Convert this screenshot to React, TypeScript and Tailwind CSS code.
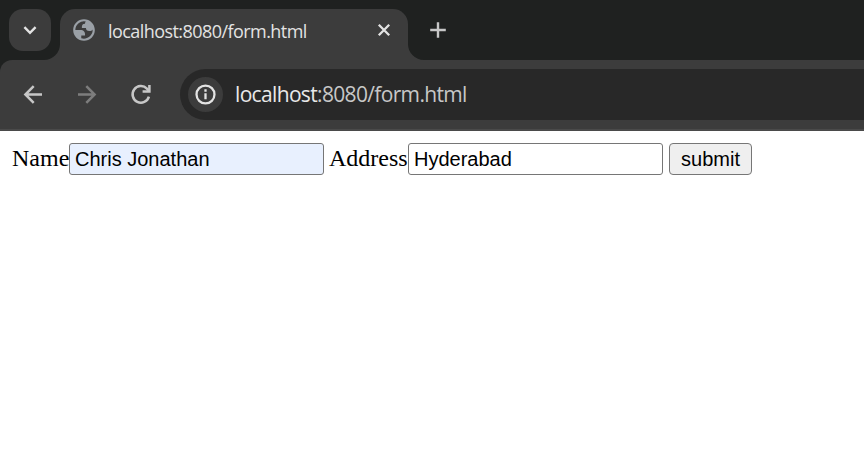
import React from "react";

const uiFont = "font-['Open_Sans','Noto_Sans',sans-serif]";
const formFont = "font-['Liberation_Sans',Arial,sans-serif]";

function GlobeIcon() {
  return (
    <svg className="size-[26px] shrink-0" viewBox="0 0 24 24" fill="#9aa0a6">
      <path
        fillRule="evenodd"
        d="M12 2C6.48 2 2 6.48 2 12s4.48 10 10 10 10-4.48 10-10S17.52 2 12 2zM4 12h4.4c3.407.022 4.922 1.73 4.543 5.127H9.488v2.47a8.004 8.004 0 0 0 10.498-8.08C19.327 12.5 18.332 13 17 13c-2.137 0-3.206-.916-3.206-2.75h-3.748c-.274-2.728.683-4.092 2.87-4.092 0-.975.327-1.597.811-1.97A8.004 8.004 0 0 0 4 12z"
      />
    </svg>
  );
}

function TabStrip() {
  return (
    <div className="flex h-[60px] items-start bg-[#1f2120] pt-[9px] pl-[9px]">
      <button className="flex size-[42px] shrink-0 items-center justify-center rounded-[14px] bg-[#3c3c3c]">
        <svg className="size-[14px]" viewBox="0 0 14 14" fill="none" stroke="#e3e3e3" strokeWidth="2.4">
          <path d="M1.4 4.2 7 9.8l5.6-5.6" />
        </svg>
      </button>
      <div className="relative ml-[9px] flex h-[51px] w-[348px] shrink-0 rounded-t-[15px] bg-[#3c3c3c] pl-[11px]">
        <svg className="absolute bottom-0 -left-4 size-4" viewBox="0 0 16 16" fill="#3c3c3c">
          <path d="M16 0v16H0A16 16 0 0 0 16 0z" />
        </svg>
        <svg className="absolute -right-4 bottom-0 size-4" viewBox="0 0 16 16" fill="#3c3c3c">
          <path d="M0 0v16h16A16 16 0 0 1 0 0z" />
        </svg>
        <div className="flex h-[42px] flex-1 items-center">
          <GlobeIcon />
          <span className={`${uiFont} ml-[11px] w-[266px] pt-[2px] text-[18px] leading-6 tracking-[-0.56px] whitespace-nowrap text-[#e3e3e3]`}>
            localhost:8080/form.html
          </span>
          <svg className="size-[20px] shrink-0" viewBox="0 0 20 20" fill="none" stroke="#e3e3e3" strokeWidth="2.3">
            <path d="m4.8 4.8 10.4 10.4m0-10.4L4.8 15.2" />
          </svg>
        </div>
      </div>
      <svg className="mt-[11px] ml-5 size-5 shrink-0" viewBox="0 0 20 20" fill="none" stroke="#c7c7c7" strokeWidth="2.4">
        <path d="M10 2.2v15.6M2.2 10h15.6" />
      </svg>
    </div>
  );
}

function Toolbar() {
  return (
    <div className="bg-[#1f2120]">
      <div className="flex h-[71px] items-start rounded-tl-[12px] border-b-2 border-[#4a4a4a] bg-[#3c3c3c] pt-[9px] pl-[21px]">
        <div className="flex h-[50px] w-[159px] shrink-0 items-center gap-[30px]">
          <svg className="size-6" viewBox="0 0 24 24" fill="none" stroke="#c7c7c7" strokeWidth="2.5">
            <path d="M21 12.5H4.8M12.7 4.2l-8.3 8.3 8.3 8.3" />
          </svg>
          <svg className="size-6" viewBox="0 0 24 24" fill="none" stroke="#7d7d7d" strokeWidth="2.5">
            <path d="M3 12.5h16.2M11.3 4.2l8.3 8.3-8.3 8.3" />
          </svg>
          <svg className="size-6" viewBox="0 0 24 24" fill="none" stroke="#c7c7c7" strokeWidth="2.5">
            <path d="M19.9 14.6A8.3 8.3 0 1 1 17.9 6.6l2 2.2" />
            <path d="M20.4 3v6.6h-6.8" />
          </svg>
        </div>
        <div className="flex h-[51px] flex-1 items-center rounded-l-full bg-[#282828] pl-2">
          <span className="flex size-[35px] shrink-0 items-center justify-center rounded-full bg-[#3c3c3c]">
            <svg className="size-[21px]" viewBox="0 0 22 22" fill="none" stroke="#e3e3e3" strokeWidth="2.4">
              <circle cx="11" cy="11" r="9.4" />
              <path d="M11 9.8v6.2M11 5.6v2.4" />
            </svg>
          </span>
          <span className={`${uiFont} ml-3 pb-px text-[21px] leading-7 tracking-[-0.66px] whitespace-nowrap text-[#c7c7c7]`}>
            <span className="text-[#e8e8e8]">localhost</span>:8080/form.html
          </span>
        </div>
      </div>
    </div>
  );
}

export default function App() {
  return (
    <div className="h-[460px] w-[864px] overflow-hidden bg-white">
      <TabStrip />
      <Toolbar />
      <form
        className="flex h-[56px] items-center pl-3 font-['Liberation_Serif','Times_New_Roman',serif] text-[24px] leading-7 text-black"
        onSubmit={(event) => event.preventDefault()}
      >
        <label className="w-[57px] shrink-0 pb-0.5" htmlFor="name">Name</label>
        <input
          id="name"
          defaultValue="Chris Jonathan"
          className={`${formFont} h-8 w-[255px] shrink-0 rounded-[3px] border border-[#767676] bg-[#e8f0fe] px-[5px] text-[20px]`}
        />
        <label className="ml-[5px] w-[79px] shrink-0 pb-0.5" htmlFor="address">Address</label>
        <input
          id="address"
          defaultValue="Hyderabad"
          className={`${formFont} h-8 w-[255px] shrink-0 rounded-[3px] border border-[#767676] bg-white px-[5px] text-[20px]`}
        />
        <button className={`${formFont} ml-[6px] h-8 w-[83px] shrink-0 rounded-[4px] border border-[#767676] bg-[#efefef] text-[20px]`}>
          submit
        </button>
      </form>
    </div>
  );
}
